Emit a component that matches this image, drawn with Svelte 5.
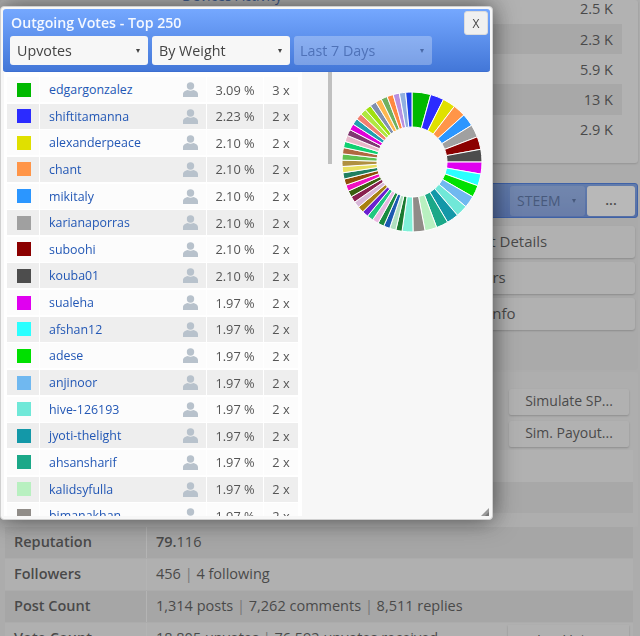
<script>
	const voters = [
		['edgargonzalez', '3.09', 3, '#00b900'],
		['shiftitamanna', '2.23', 2, '#2b2bff'],
		['alexanderpeace', '2.10', 2, '#e0e000'],
		['chant', '2.10', 2, '#ff9548'],
		['mikitaly', '2.10', 2, '#2b96ff'],
		['karianaporras', '2.10', 2, '#a0a0a0'],
		['suboohi', '2.10', 2, '#8b0000'],
		['kouba01', '2.10', 2, '#4d4d4d'],
		['sualeha', '1.97', 2, '#e000f0'],
		['afshan12', '1.97', 2, '#2bffff'],
		['adese', '1.97', 2, '#00e000'],
		['anjinoor', '1.97', 2, '#70b8f0'],
		['hive-126193', '1.97', 2, '#70e8d8'],
		['jyoti-thelight', '1.97', 2, '#1398a8'],
		['ahsansharif', '1.97', 2, '#1ba888'],
		['kalidsyfulla', '1.97', 2, '#b8f0c0'],
		['bimanakhan', '1.97', 2, '#908c88']
	];

	const others = [
		'#1a7a30', '#b0e0c0', '#1a5ab0', '#1a8a40', '#e8b8e0', '#20c880', '#6a20d0', '#a88010',
		'#d8b8d8', '#8a2050', '#3a6010', '#f010c0', '#905008', '#208060', '#e8e060', '#b09040',
		'#60c050', '#b06840', '#10d070', '#e8b8c8', '#803870', '#e000d8', '#20a0b0', '#f08070',
		'#b0e840', '#a0e010', '#8090b0', '#ffb850', '#70b060', '#ff8840', '#b890e0', '#90b0e0',
		'#1a40e8'
	];

	const slices = [
		...voters.map((v) => ({ size: Number(v[1]) * 5, color: v[3] })),
		{ size: 9, color: '#80f0d8' },
		...others.map((color) => ({ size: 5.18, color }))
	];

	function point(radius, angle) {
		const rad = ((angle - 90) * Math.PI) / 180;
		return (radius * Math.cos(rad)).toFixed(2) + ' ' + (radius * Math.sin(rad)).toFixed(2);
	}

	const total = slices.reduce((sum, s) => sum + s.size, 0);
	let angle = 0;
	const wedges = slices.map((s) => {
		const from = angle;
		angle += (s.size / total) * 360;
		return {
			color: s.color,
			d: `M ${point(35, from)} L ${point(70, from)} A 70 70 0 0 1 ${point(70, angle)} L ${point(35, angle)} A 35 35 0 0 0 ${point(35, from)} Z`
		};
	});

	const topRows = ['2.5 K', '2.3 K', '5.9 K', '13 K', '2.9 K'];
</script>

<div class="page">
	<section class="panel top-panel">
		{#each topRows as value, i}
			<div class="top-row" class:shaded={i % 2 === 1}>
				<span class="top-label">{i === 0 ? 'Devices Activity' : ''}</span>
				<span>{value}</span>
			</div>
		{/each}
	</section>

	<section class="panel tools-panel">
		<div class="tools-bar">
			<div class="bar-select">STEEM <i class="arrow"></i></div>
			<div class="bar-btn">...</div>
		</div>
		<div class="wide-btn">Account Details</div>
		<div class="wide-btn">Followers</div>
		<div class="wide-btn">Profile Info</div>
	</section>

	<section class="panel sim-panel">
		<div class="sim-row first"><div class="sim-btn">Simulate SP...</div></div>
		<div class="sim-row"><div class="sim-btn">Sim. Payout...</div></div>
		<div class="sim-blank"></div>
		<div class="sim-blank shaded"></div>
	</section>

	<section class="stats">
		<div class="stat shaded">
			<div class="stat-name">Reputation</div>
			<div class="stat-value"><b>79.</b>116</div>
		</div>
		<div class="stat">
			<div class="stat-name">Followers</div>
			<div class="stat-value">456 <span class="sep">|</span> 4 following</div>
		</div>
		<div class="stat shaded">
			<div class="stat-name">Post Count</div>
			<div class="stat-value">
				1,314 posts <span class="sep">|</span> 7,262 comments <span class="sep">|</span> 8,511 replies
			</div>
		</div>
		<div class="stat">
			<div class="stat-name">Vote Count</div>
			<div class="stat-value vote">
				<span>18,805 upvotes <span class="sep">|</span> 76,592 upvotes received</span>
				<span class="vote-btn">Inc. Votes</span>
			</div>
		</div>
	</section>
</div>

<div class="overlay"></div>

<div class="dialog">
	<header class="head">
		<div class="title-row">
			<h2>Outgoing Votes - Top 250</h2>
			<button class="close">X</button>
		</div>
		<div class="filters">
			<div class="select">Upvotes <i class="arrow"></i></div>
			<div class="select">By Weight <i class="arrow"></i></div>
			<div class="select off">Last 7 Days <i class="arrow"></i></div>
		</div>
	</header>

	<div class="content">
		<div class="list">
			{#each voters as v, i}
				<div class="row" class:shaded={i % 2 === 1}>
					<div class="cell swatch-cell"><span class="swatch" style:background={v[3]}></span></div>
					<div class="cell name-cell">
						<span class="name">{v[0]}</span>
						<svg class="person" width="15" height="15" viewBox="0 0 15 15">
							<circle cx="7.5" cy="4" r="3.7" fill="#b8c2cc" />
							<path d="M0 15 V12.2 C0 9.6 2.6 8.6 4.6 8 C6.4 9 8.6 9 10.4 8 C12.4 8.6 15 9.6 15 12.2 V15 Z" fill="#b8c2cc" />
						</svg>
					</div>
					<div class="cell pct-cell">{v[1]} %</div>
					<div class="cell count-cell">{v[2]} x</div>
				</div>
			{/each}
		</div>
		<div class="scroll-track"><div class="scroll-thumb"></div></div>
		<svg class="pie" width="142" height="142" viewBox="-71 -71 142 142">
			{#each wedges as w}
				<path d={w.d} fill={w.color} stroke="#fff" stroke-width="1" />
			{/each}
		</svg>
		<svg class="grip" width="8" height="8" viewBox="0 0 8 8">
			<path d="M8 0 V8 H0 Z" fill="#9a9a9a" />
			<path d="M8 4 V8 H4 Z" fill="#777" />
		</svg>
	</div>
</div>

<style>
	:global(body) {
		margin: 0;
		background: #e9e9e9;
		font-family: 'Open Sans', sans-serif;
		color: #333;
		font-size: 14px;
		overflow: hidden;
	}

	.page {
		width: 640px;
		height: 636px;
		overflow: hidden;
		display: flex;
		flex-direction: column;
		align-items: flex-end;
	}
	.panel {
		flex: none;
		background: #f4f4f4;
		border-radius: 3px;
		box-sizing: border-box;
	}
	.shaded {
		background: #e2e2e2;
	}

	.top-panel {
		width: 638px;
		height: 163px;
		margin-right: 2px;
		padding: 0 16px 0 6px;
		display: flex;
		flex-direction: column;
		box-shadow: 0 1px 2px rgba(0, 0, 0, 0.2);
	}
	.top-row {
		height: 30.2px;
		flex: none;
		display: flex;
		justify-content: space-between;
		align-items: center;
		font-size: 14.5px;
		padding: 0 9px 0 176px;
		box-sizing: border-box;
	}
	.top-row:first-child {
		height: 24px;
		align-items: flex-end;
		padding-bottom: 6px;
	}
	.top-label {
		align-self: flex-start;
		margin-top: -14px;
		font-size: 14px;
		color: #2257b5;
	}

	.tools-panel {
		width: 638px;
		height: 187px;
		margin: 20px 2px 0 0;
		background: #e6e6e6;
	}
	.tools-bar {
		height: 35px;
		margin-bottom: 8px;
		background: linear-gradient(#5f8fe8, #4a78dc);
		border: 1px solid #2060e0;
		border-radius: 3px;
		display: flex;
		align-items: center;
		gap: 2px;
		padding-right: 2px;
		box-sizing: border-box;
	}
	.bar-select {
		width: 75px;
		height: 30px;
		margin-left: auto;
		box-sizing: border-box;
		background: rgba(255, 255, 255, 0.2);
		color: #2f5090;
		border-radius: 3px;
		font-size: 14px;
		display: flex;
		align-items: center;
		justify-content: space-between;
		padding: 0 9px 0 7px;
	}
	.bar-btn {
		width: 48px;
		height: 30px;
		background: #fff;
		border-radius: 3px;
		text-align: center;
		line-height: 28px;
		font-weight: 600;
	}
	.wide-btn {
		height: 32px;
		margin: 4px 3px 4px 5px;
		padding-left: 434px;
		line-height: 30px;
		box-sizing: border-box;
		background: #f3f3f3;
		border-radius: 3px;
		box-shadow: 0 1px 2px rgba(0, 0, 0, 0.25);
		font-size: 15px;
	}

	.sim-panel {
		width: 638px;
		height: 155px;
		margin: 2px 2px 0 0;
		padding: 8px 5px 0 5px;
		background: #ececec;
	}
	.sim-row {
		height: 33px;
		display: flex;
		justify-content: flex-end;
		align-items: flex-start;
		padding-right: 4px;
		box-sizing: border-box;
	}
	.sim-row.first {
		height: 37px;
		padding-top: 9px;
	}
	.sim-row:not(.first) {
		padding-top: 4px;
	}
	.sim-btn {
		width: 120px;
		height: 26px;
		background: #f3f3f3;
		border-radius: 2px;
		box-shadow: 0 1px 2px rgba(0, 0, 0, 0.25);
		text-align: center;
		line-height: 24px;
		font-size: 14px;
	}
	.sim-blank {
		height: 32px;
		background: #f2f2f2;
	}
	.sim-blank.shaded {
		height: 31px;
		background: #e2e2e2;
	}

	.stats {
		width: 628px;
		margin-right: 7px;
		flex: none;
	}
	.stat {
		display: flex;
		height: 31px;
		flex: none;
		align-items: stretch;
		margin-bottom: 1px;
		background: #f0f0f0;
	}
	.stat.shaded {
		background: #dedede;
	}
	.stat-name {
		width: 142px;
		flex: none;
		padding-left: 9px;
		box-sizing: border-box;
		font-weight: 600;
		font-size: 14.5px;
		line-height: 30px;
		border-right: 1px solid #f7f7f7;
	}
	.stat-value {
		flex: 1;
		padding-left: 9px;
		font-size: 14.5px;
		line-height: 30px;
	}
	b {
		font-weight: 600;
	}
	.sep {
		color: #888;
	}
	.vote {
		display: flex;
		justify-content: space-between;
	}
	.vote-btn {
		width: 121px;
		margin: 2px 4px 0 0;
		text-align: center;
		background: #f3f3f3;
		box-shadow: 0 1px 2px rgba(0, 0, 0, 0.25);
		font-size: 14px;
	}

	.overlay {
		position: fixed;
		inset: 0;
		background: rgba(100, 100, 100, 0.46);
	}

	.dialog {
		position: fixed;
		left: 0;
		top: 6px;
		width: 493px;
		height: 514px;
		box-sizing: border-box;
		padding: 3px;
		background: #f7f7f7;
		border-radius: 4px;
		border: 1px solid #d0d0d0;
		box-shadow: 0 0 24px rgba(0, 0, 0, 0.6);
		display: flex;
		flex-direction: column;
		overflow: hidden;
	}
	.head {
		flex: none;
		height: 63px;
		margin: -1px -1px 0 -1px;
		padding: 2px 2px 0 7px;
		box-sizing: border-box;
		background: linear-gradient(#75a8ff, #4377d8);
		border-bottom: 1px solid #3d6fd0;
		border-radius: 3px;
	}
	.title-row {
		display: flex;
		justify-content: space-between;
		align-items: flex-start;
		height: 25px;
	}
	h2 {
		margin: 2px 0 0 1px;
		color: #f4f8ff;
		font-size: 14.2px;
		font-weight: 600;
		line-height: 20px;
	}
	.close {
		width: 24px;
		height: 24px;
		padding: 0;
		border: 1px solid #dcdcdc;
		border-radius: 3px;
		background: #f0f0f0;
		color: #444;
		font: 12px 'Open Sans', sans-serif;
	}
	.filters {
		display: flex;
		gap: 4px;
	}
	.select {
		width: 138px;
		height: 29px;
		box-sizing: border-box;
		padding: 0 8px 0 7px;
		background: #f7f7f7;
		border-radius: 3px;
		color: #444;
		font-size: 14.3px;
		display: flex;
		align-items: center;
		justify-content: space-between;
	}
	.select.off {
		background: rgba(255, 255, 255, 0.28);
		color: #4f72b8;
		padding-left: 6px;
	}
	.arrow {
		width: 0;
		height: 0;
		border-left: 2.5px solid transparent;
		border-right: 2.5px solid transparent;
		border-top: 4px solid #444;
	}
	.off .arrow {
		border-top-color: #4a6aa8;
	}
	.bar-select .arrow {
		border-top-color: #2f5090;
	}

	.content {
		flex: 1;
		min-height: 0;
		display: flex;
		position: relative;
		overflow: hidden;
	}
	.list {
		width: 298px;
		flex: none;
		box-sizing: border-box;
		background: #fff;
		padding: 5px 0 0 3px;
		height: 100%;
		overflow: hidden;
	}
	.row {
		display: flex;
		gap: 1px;
		height: 25px;
		margin-bottom: 1.65px;
		background: #fff;
	}
	.cell {
		display: flex;
		align-items: center;
		box-sizing: border-box;
		font-size: 12.8px;
		color: #555;
		background: #fcfcfc;
	}
	.shaded .cell {
		background: #eee;
	}
	.swatch-cell {
		width: 32px;
		justify-content: center;
	}
	.swatch {
		width: 14px;
		height: 14px;
		margin-left: 1px;
	}
	.name-cell {
		width: 166px;
		justify-content: space-between;
		padding: 0 8px 0 9px;
	}
	.name {
		color: #2257b5;
		font-size: 12.4px;
	}
	.pct-cell {
		width: 56px;
		justify-content: center;
	}
	.count-cell {
		width: 34px;
		justify-content: center;
	}
	.scroll-track {
		width: 30px;
		flex: none;
		position: relative;
	}
	.scroll-thumb {
		position: absolute;
		left: 26px;
		top: 0;
		width: 4px;
		height: 92px;
		background: #c0c0c0;
	}
	.pie {
		position: absolute;
		left: 337px;
		top: 19px;
	}
	.grip {
		position: absolute;
		right: 0;
		bottom: 0;
	}
</style>
